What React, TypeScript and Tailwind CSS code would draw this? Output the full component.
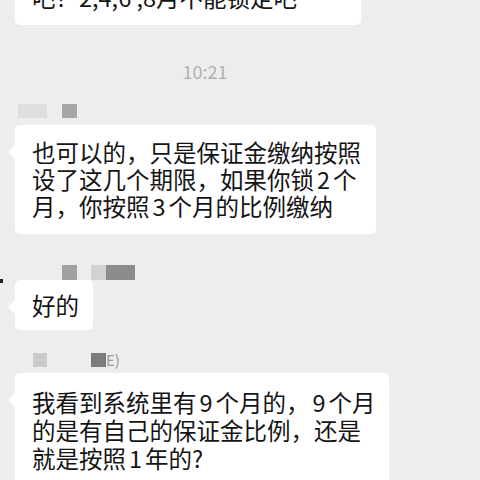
import React from 'react';

const font = { fontFamily: '"Noto Sans CJK SC", "Noto Sans", sans-serif' };

// digits in the chat font sit with a little air around them
function renderLine(l: string, spaced: boolean) {
  if (!spaced) return l;
  return l.split(/(\d)/).map((part, i) =>
    /^\d$/.test(part) ? (
      <span key={i} className="mx-[3px]">{part}</span>
    ) : (
      <React.Fragment key={i}>{part}</React.Fragment>
    )
  );
}

function Bubble({
  lines,
  className,
  tail = true,
  spaced = true,
}: {
  lines: string[];
  className: string;
  tail?: boolean;
  spaced?: boolean;
}) {
  return (
    <div className={`relative ml-[15px] bg-white rounded-[5px] pl-[17px] text-[23.5px] text-[#141414] whitespace-nowrap ${className}`}>
      {tail && (
        <span className="absolute left-[-5px] top-[22px] w-[10px] h-[10px] bg-white rotate-45" />
      )}
      {lines.map((l, i) => (
        <div key={i} className="relative">{renderLine(l, spaced)}</div>
      ))}
    </div>
  );
}

export default function App() {
  return (
    <div className="w-[480px] h-[480px] overflow-hidden bg-[#ededed] flex flex-col" style={font}>
      <Bubble
        tail={false}
        spaced={false}
        lines={['吧？2,4,6 ,8月不能锁定吧']}
        className="mt-[-30px] w-[346px] pt-[14px] pb-[14px] leading-[27px]"
      />

      <div className="mt-[35px] w-[410px] text-center text-[18px] leading-[23px] text-[#b0b0b0]">10:21</div>

      {/* blurred nickname */}
      <div className="mt-[21px] flex h-[14px] items-start blur-[0.6px]">
        <span className="ml-[18px] w-[29px] h-[14px] bg-[#dedede]" />
        <span className="ml-[15px] w-[15px] h-[14px] bg-[#a6a6a6]" />
      </div>

      <Bubble
        lines={['也可以的，只是保证金缴纳按照', '设了这几个期限，如果你锁2个', '月，你按照3个月的比例缴纳']}
        className="mt-[7px] w-[361px] py-[14px] leading-[27px]"
      />

      <div className="mt-[31px] flex h-[15px] items-start relative">
        <span className="absolute left-0 top-[14px] w-[3px] h-[4px] bg-[#222]" />
        <span className="ml-[62px] w-[15px] h-[15px] bg-[#a0a0a0] blur-[0.5px]" />
        <span className="ml-[14px] w-[15px] h-[15px] bg-[#d2d2d2] blur-[0.5px]" />
        <span className="w-[29px] h-[15px] bg-[#8c8c8c] blur-[0.5px]" />
      </div>

      <Bubble lines={['好的']} className="mt-0 w-[78px] pt-[12px] pb-[11px] leading-[27px]" />

      <div className="mt-[23px] flex h-[14px] items-center">
        <span className="ml-[33px] w-[14px] h-[14px] bg-[#cacaca] blur-[0.6px]" />
        <span className="ml-[44px] w-[15px] h-[14px] bg-[#7c7c7c] blur-[0.4px]" />
        <span className="text-[15px] leading-[14px] text-[#9a9a9a]">E)</span>
      </div>

      <Bubble
        lines={['我看到系统里有9个月的，9个月', '的是有自己的保证金比例，还是', '就是按照1年的?']}
        className="mt-[6px] w-[374px] pt-[15px] pb-[14px] leading-[28px]"
      />
    </div>
  );
}
